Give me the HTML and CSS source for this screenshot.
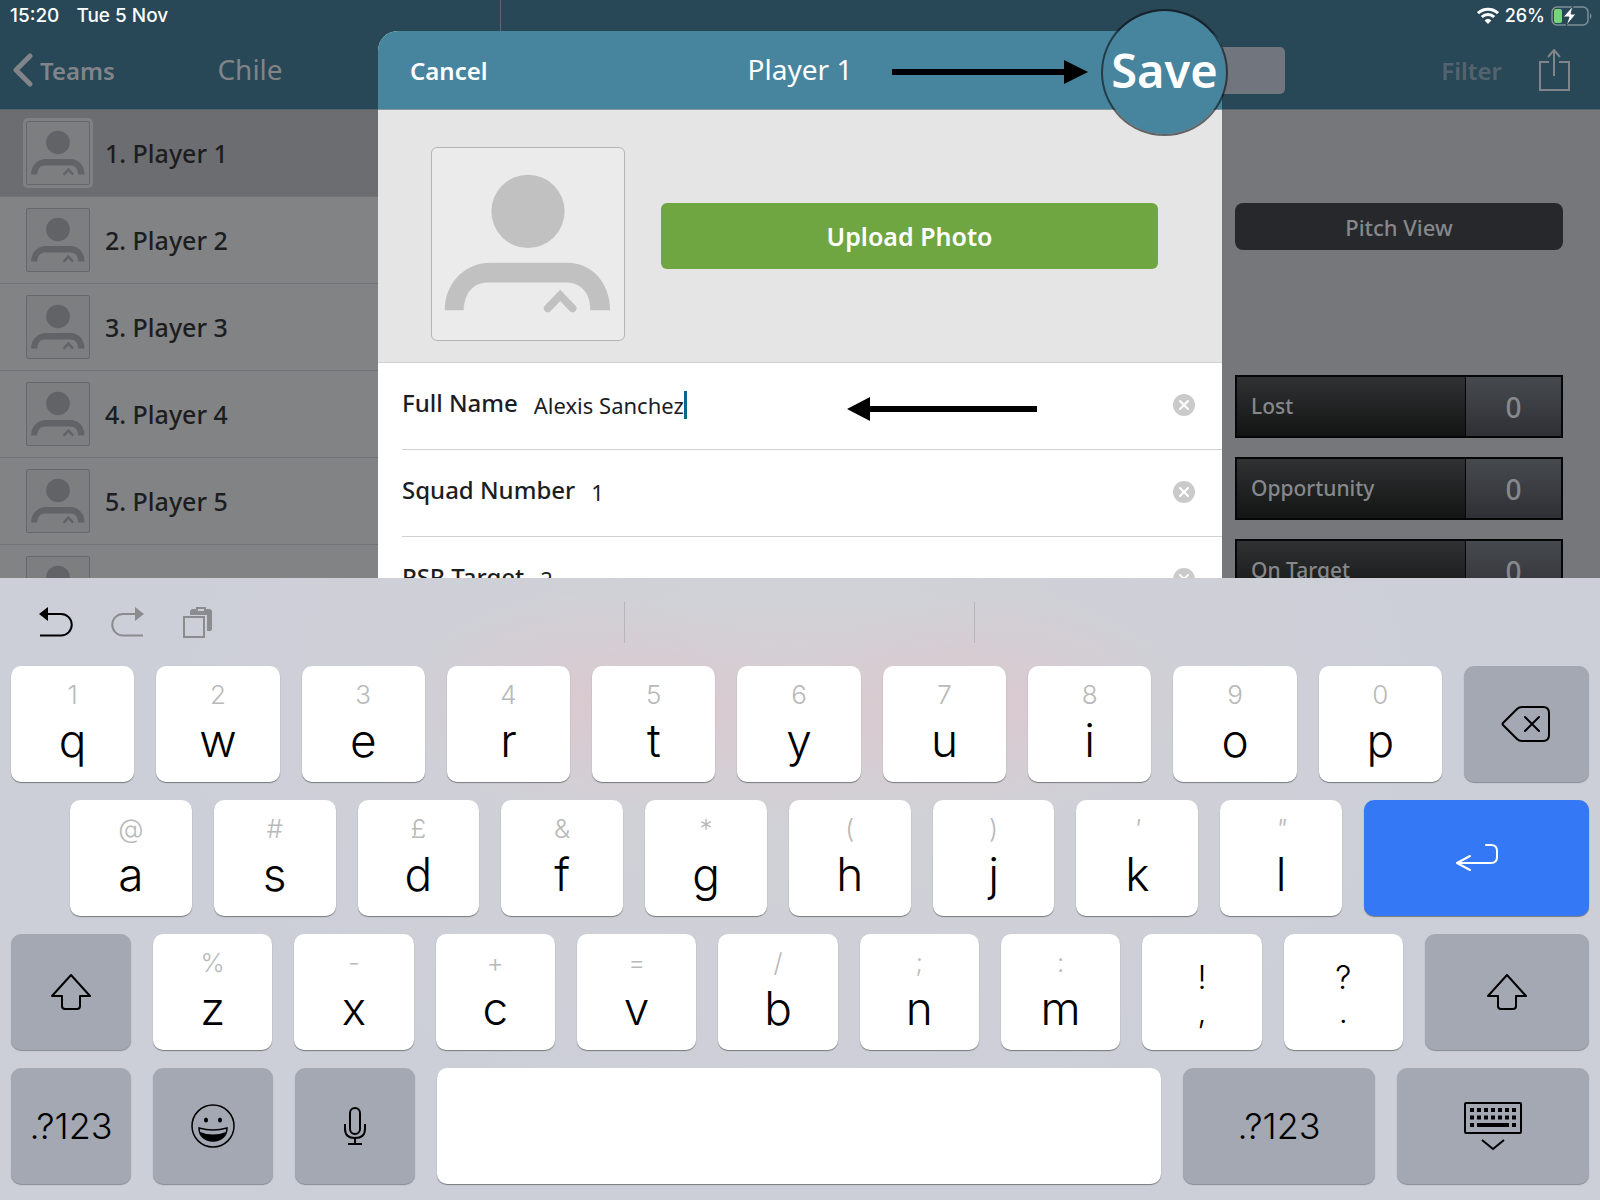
FILE: index.html
```html
<!DOCTYPE html>
<html lang="en">
<head>
  <meta charset="UTF-8">
  <meta name="viewport" content="width=device-width, initial-scale=1.0">
  <title>Player 1</title>
  <link rel="stylesheet" href="styles.css">
</head>
<body>
  <svg width="0" height="0" class="defs" aria-hidden="true">
    <symbol id="person" viewBox="0 0 194 194">
      <circle cx="97" cy="64" r="37"/>
      <path d="M13 164v-4c2-26 22-44 46-44h78c24 0 43 20 43 48h-20c0-18-10-28-25-28H57c-15 0-24 10-25 28z"/>
      <path class="person-chevron" d="M117 162l12.500-13 12.500 13"/>
    </symbol>
    <symbol id="clear" viewBox="0 0 22 22">
      <circle cx="11" cy="11" r="11" fill="#cacaca"/>
      <path d="M7 7l8 8M15 7l-8 8" stroke="#fff" stroke-width="2" stroke-linecap="round"/>
    </symbol>
    <symbol id="shift" viewBox="0 0 42 38">
      <path d="M21 2L40 23H30v10q0 3-3 3H15q-3 0-3-3V23H2z" fill="none" stroke="#000" stroke-width="2" stroke-linejoin="round"/>
    </symbol>
  </svg>

  <div class="app">
    <div class="stage">
      <aside class="sidebar">
        <div class="status">
          <span>15:20</span>
          <span>Tue 5 Nov</span>
        </div>
        <div class="nav">
          <button class="nav-back">
            <svg width="20" height="34" viewBox="0 0 20 34"><path d="M17 3L3 17l14 14" fill="none" stroke="currentColor" stroke-width="5" stroke-linecap="round" stroke-linejoin="round"/></svg>
            Teams
          </button>
          <h1 class="nav-title">Chile</h1>
        </div>
        <ul class="players">
          <li class="player selected"><svg class="avatar"><use href="#person"/></svg>1. Player 1</li>
          <li class="player"><svg class="avatar"><use href="#person"/></svg>2. Player 2</li>
          <li class="player"><svg class="avatar"><use href="#person"/></svg>3. Player 3</li>
          <li class="player"><svg class="avatar"><use href="#person"/></svg>4. Player 4</li>
          <li class="player"><svg class="avatar"><use href="#person"/></svg>5. Player 5</li>
          <li class="player"><svg class="avatar"><use href="#person"/></svg></li>
        </ul>
      </aside>

      <main class="main">
        <div class="status status-right">
          <svg width="22" height="17" viewBox="0 0 22 17" fill="none" stroke="#fff" stroke-width="3">
            <path d="M1 6.200a14.500 14.500 0 0 1 20 0"/>
            <path d="M4.800 10a9 9 0 0 1 12.400 0"/>
            <path d="M11 17l-3.400-3.600a5 5 0 0 1 6.800 0z" fill="#fff" stroke="none"/>
          </svg>
          <span>26%</span>
          <svg width="42" height="20" viewBox="0 0 42 20">
            <rect x="1" y="1" width="36" height="18" rx="5" fill="none" stroke="#7f9099" stroke-width="1.500"/>
            <path d="M39 7q3 3 0 6z" fill="#7f9099"/>
            <rect x="3" y="3" width="8" height="14" rx="2" fill="#76d672"/>
            <path d="M22 0L12 11h6l-3 9 10-12h-5z" fill="#fff" stroke="#284757" stroke-width="1"/>
          </svg>
        </div>
        <div class="nav nav-right">
          <div class="segment"></div>
          <button class="nav-filter">Filter</button>
          <button class="nav-share" aria-label="Share">
            <svg width="32" height="42" viewBox="0 0 32 42" fill="none" stroke="currentColor" stroke-width="2"><path d="M11 13H2v28h29V13H21M16 27V2M10 8l6-7 6 7"/></svg>
          </button>
        </div>
        <div class="stats">
          <button class="pitch-view">Pitch View</button>
          <div class="stat"><span class="stat-name">Lost</span><span class="stat-value">0</span></div>
          <div class="stat"><span class="stat-name">Opportunity</span><span class="stat-value">0</span></div>
          <div class="stat"><span class="stat-name">On Target</span><span class="stat-value">0</span></div>
        </div>
      </main>

      <form class="modal">
        <div class="modal-header">
          <button type="button" class="cancel">Cancel</button>
          <h2 class="modal-title">Player 1</h2>
          <svg class="arrow arrow-save" width="196" height="26" viewBox="0 0 196 26"><path d="M0 10h172V1l24 12-24 12v-9H0z"/></svg>
          <button type="submit" class="save">Save</button>
        </div>
        <div class="photo">
          <svg class="photo-frame"><use href="#person"/></svg>
          <button type="button" class="upload">Upload Photo</button>
        </div>
        <div class="field">
          <label for="full-name">Full Name</label>
          <input id="full-name" type="text" size="13" value="Alexis Sanchez">
          <span class="caret"></span>
          <svg class="arrow arrow-name" width="190" height="26" viewBox="0 0 190 26"><path d="M190 10v6H23v9L0 13 23 1v9z"/></svg>
          <button type="button" class="clear" aria-label="Clear"><svg width="22" height="22"><use href="#clear"/></svg></button>
        </div>
        <div class="field">
          <label for="squad-number">Squad Number</label>
          <input id="squad-number" type="text" size="3" value="1">
          <button type="button" class="clear" aria-label="Clear"><svg width="22" height="22"><use href="#clear"/></svg></button>
        </div>
        <div class="field">
          <label for="psr-target">PSR Target</label>
          <input id="psr-target" type="text" size="3" value="2">
          <button type="button" class="clear" aria-label="Clear"><svg width="22" height="22"><use href="#clear"/></svg></button>
        </div>
      </form>
    </div>

    <div class="keyboard">
      <div class="shortcuts">
        <div class="shortcut-icons">
          <button aria-label="Undo"><svg width="34" height="30" viewBox="0 0 34 30"><path d="M1 28.500h21a10.700 10.700 0 0 0 0-21.500H8" fill="none" stroke="#000" stroke-width="2"/><path d="M0 7L9 0v14z"/></svg></button>
          <button aria-label="Redo"><svg width="34" height="30" viewBox="0 0 34 30" fill="#8b8c90"><path d="M32 28.500H12a10.700 10.700 0 0 1 0-21.500h14" fill="none" stroke="#8b8c90" stroke-width="2"/><path d="M33 7L24 0v14z"/></svg></button>
          <button aria-label="Paste"><svg width="30" height="32" viewBox="0 0 30 32" fill="none" stroke="#8b8c90"><path d="M7 6q0-3 3-3h16q3 0 3 3v17q0 2-3 2h-2V9H7z" fill="#8b8c90" stroke="none"/><rect x="1" y="11" width="20" height="20" stroke-width="2"/><path d="M14 2h8v4h-8z" fill="#cdcfd8" stroke-width="2"/></svg></button>
        </div>
        <div class="suggestion"></div>
        <div class="suggestion"></div>
        <div class="suggestion"></div>
      </div>

      <div class="keys">
        <button class="key"><small>1</small>q</button>
        <button class="key"><small>2</small>w</button>
        <button class="key"><small>3</small>e</button>
        <button class="key"><small>4</small>r</button>
        <button class="key"><small>5</small>t</button>
        <button class="key"><small>6</small>y</button>
        <button class="key"><small>7</small>u</button>
        <button class="key"><small>8</small>i</button>
        <button class="key"><small>9</small>o</button>
        <button class="key"><small>0</small>p</button>
        <button class="key dark delete" aria-label="Delete">
          <svg width="50" height="38" viewBox="0 0 50 38" fill="none" stroke="#000" stroke-width="2" stroke-linejoin="round" stroke-linecap="round"><path d="M16 4q2-2 5-2h21q6 0 6 6v22q0 6-6 6H21q-3 0-5-2L2 20q-1-1 0-2zM24 12l14 14M38 12L24 26"/></svg>
        </button>
      </div>

      <div class="keys keys-home">
        <button class="key"><small>@</small>a</button>
        <button class="key"><small>#</small>s</button>
        <button class="key"><small>£</small>d</button>
        <button class="key"><small>&amp;</small>f</button>
        <button class="key"><small>*</small>g</button>
        <button class="key"><small>(</small>h</button>
        <button class="key"><small>)</small>j</button>
        <button class="key"><small class="slant">'</small>k</button>
        <button class="key"><small class="slant">"</small>l</button>
        <button class="key return" aria-label="Return">
          <svg width="44" height="30" viewBox="0 0 44 30" fill="none" stroke="#fff" stroke-width="2" stroke-linecap="round" stroke-linejoin="round"><path d="M31 2h5q6 0 6 6v6q0 6-6 6H2M15 13L2 20l13 7"/></svg>
        </button>
      </div>

      <div class="keys">
        <button class="key dark shift" aria-label="Shift"><svg width="42" height="38"><use href="#shift"/></svg></button>
        <button class="key"><small>%</small>z</button>
        <button class="key"><small>-</small>x</button>
        <button class="key"><small>+</small>c</button>
        <button class="key"><small>=</small>v</button>
        <button class="key"><small>/</small>b</button>
        <button class="key"><small>;</small>n</button>
        <button class="key"><small>:</small>m</button>
        <button class="key punct"><span>!</span><span>,</span></button>
        <button class="key punct"><span>?</span><span>.</span></button>
        <button class="key dark shift-right" aria-label="Shift"><svg width="42" height="38"><use href="#shift"/></svg></button>
      </div>

      <div class="keys keys-bottom">
        <button class="key dark">.?123</button>
        <button class="key dark" aria-label="Emoji">
          <svg width="44" height="44" viewBox="0 0 44 44" fill="none" stroke="#000" stroke-width="2"><circle cx="22" cy="22" r="21" stroke-width="1.500"/><ellipse cx="15" cy="16" rx="2" ry="2.500" fill="#000" stroke="none"/><ellipse cx="29" cy="16" rx="2" ry="2.500" fill="#000" stroke="none"/><path d="M8 24q14 4 28 0c0 8-6 13-14 13S8 32 8 24z" stroke-width="1.500"/><path d="M9 28q13 5 26 0c-2 6-7 9-13 9s-11-3-13-9z" fill="#000" stroke="none"/></svg>
        </button>
        <button class="key dark" aria-label="Dictate">
          <svg width="24" height="40" viewBox="0 0 24 40" fill="none" stroke="#000" stroke-width="2"><rect x="7" y="2" width="10" height="26" rx="5"/><path d="M2 18v5q0 9 10 9t10-9v-5M12 32v6M5 38h14"/></svg>
        </button>
        <button class="key space" aria-label="Space"></button>
        <button class="key dark wide">.?123</button>
        <button class="key dark wide" aria-label="Hide keyboard">
          <svg width="60" height="50" viewBox="0 0 60 50" fill="none" stroke="#000"><rect x="2" y="2" width="56" height="30" rx="1" stroke-width="2"/><path d="M7 9h46M7 16.500h46" stroke-width="4" stroke-dasharray="4 3"/><path d="M7 24h4M49 24h4M14 24h32" stroke-width="4"/><path d="M19 39l11 9 11-9" stroke-width="2"/></svg>
        </button>
      </div>
    </div>
  </div>
</body>
</html>
```
FILE: styles.css
```css
:root {
  --bar: #284757;
  --bar-text: #818488;
  --teal: #47849d;
  --green: #6fa642;
  --ui: "Noto Sans", "Open Sans", sans-serif;
  --system: Inter, Roboto, sans-serif;
}

* {
  margin: 0;
  padding: 0;
  box-sizing: border-box;
}

body {
  font-family: var(--ui);
  color: #1c1d1f;
}

button {
  font: inherit;
  color: inherit;
  background: none;
  border: 0;
}

svg {
  display: block;
  flex: none;
}

.defs {
  position: absolute;
}

.person-chevron {
  fill: none;
  stroke: currentColor;
  stroke-width: 8;
  stroke-linecap: round;
}

.app {
  display: flex;
  flex-direction: column;
  height: 100vh;
}

.stage {
  position: relative;
  flex: 1;
  min-height: 0;
  display: flex;
  overflow: hidden;
}

/* left and right panes */
.sidebar {
  width: 500px;
  background: #828385;
}

.main {
  flex: 1;
  background: #76777b;
}

.status {
  display: flex;
  align-items: center;
  gap: 17px;
  height: 31px;
  padding: 0 10px;
  background: var(--bar);
  color: #fff;
  font-family: var(--system);
  font-size: 19px;
  font-weight: 500;
}

.status-right {
  justify-content: flex-end;
  gap: 6px;
  padding-right: 7px;
  font-size: 18px;
}

.main .status,
.main .nav {
  border-left: 1px solid #626a70;
}

.nav {
  position: relative;
  display: flex;
  align-items: center;
  height: 79px;
  padding: 0 13px;
  background: var(--bar);
  border-bottom: 1px solid #57646b;
  color: var(--bar-text);
}

.nav-back {
  display: flex;
  align-items: center;
  gap: 7px;
  font-size: 24px;
  font-weight: 600;
}

.nav-title,
.modal-title {
  position: absolute;
  left: 0;
  right: 0;
  padding-bottom: 3px;
  text-align: center;
  font-size: 28px;
  font-weight: 400;
  pointer-events: none;
}

.nav-right {
  justify-content: flex-end;
  padding-right: 30px;
}

.segment {
  width: 120px;
  height: 47px;
  margin-right: 156px;
  border-radius: 5px;
  background: #70757e;
}

.nav-filter {
  color: #54646e;
  font-size: 24px;
  font-weight: 600;
}

.nav-share {
  margin-left: 36px;
}

.players {
  list-style: none;
}

.player {
  display: flex;
  align-items: center;
  gap: 15px;
  height: 87px;
  padding-left: 26px;
  border-bottom: 1px solid #717276;
  font-size: 25px;
  font-weight: 500;
}

.player.selected {
  background: #6c6d71;
}

.avatar {
  width: 64px;
  height: 64px;
  border: 1px solid #66676b;
  border-radius: 2px;
  background: #7d7e80;
  color: #626367;
  fill: currentColor;
}

.selected .avatar {
  box-shadow: 0 0 0 3px #7f8082;
}

.stats {
  width: 328px;
  margin: 93px 37px 0 auto;
}

.pitch-view {
  display: block;
  width: 100%;
  height: 47px;
  margin-bottom: 125px;
  border-radius: 8px;
  background: #27282c;
  color: #85878b;
  font-size: 22px;
  font-weight: 500;
}

.stat {
  display: flex;
  height: 63px;
  margin-bottom: 19px;
  border: 2px solid #050606;
  color: #86888b;
  font-weight: 500;
}

.stat-name {
  flex: 1;
  padding-left: 14px;
  background: linear-gradient(#303133, #131514);
  font-size: 21px;
  line-height: 59px;
}

.stat-value {
  width: 96px;
  border-left: 1px solid #050606;
  background: linear-gradient(#464a4e, #2f3036);
  font-size: 28px;
  line-height: 61px;
  text-align: center;
}

/* edit player sheet */
.modal {
  position: absolute;
  top: 31px;
  left: 50%;
  width: 844px;
  transform: translateX(-50%);
  background: #fff;
  border-radius: 20px 20px 0 0;
}

.modal-header {
  position: relative;
  display: flex;
  align-items: center;
  height: 79px;
  padding: 0 32px;
  background: var(--teal);
  border-bottom: 1px solid #84989f;
  border-radius: 20px 20px 0 0;
  color: #fff;
}

.cancel {
  font-size: 24px;
  font-weight: 600;
}

.save {
  position: absolute;
  top: -22px;
  right: -6px;
  width: 127px;
  height: 127px;
  padding-bottom: 6px;
  border: 2px solid rgba(10, 12, 15, 0.6);
  border-radius: 50%;
  background: var(--teal) padding-box;
  font-size: 47px;
  font-weight: 600;
}

.arrow {
  position: absolute;
}

.arrow-save {
  left: 514px;
  top: 28px;
}

.arrow-name {
  left: 469px;
  top: 33px;
}

.photo {
  display: flex;
  align-items: center;
  gap: 36px;
  height: 253px;
  padding: 0 64px 0 53px;
  background: #e5e5e5;
  border-bottom: 1px solid #d0d0d0;
}

.photo-frame {
  width: 194px;
  height: 194px;
  margin-top: 16px;
  border: 1px solid #b5b5b5;
  border-radius: 6px;
  background: #ebebeb;
  color: #c1c1c1;
  fill: currentColor;
}

.upload {
  flex: 1;
  height: 66px;
  border-radius: 6px;
  background: var(--green);
  color: #fff;
  font-size: 25px;
  font-weight: 600;
}

.field {
  position: relative;
  display: flex;
  align-items: center;
  height: 87px;
  padding: 0 27px 3px 24px;
}

.field::after {
  content: "";
  position: absolute;
  left: 24px;
  right: 0;
  bottom: 0;
  border-bottom: 1px solid #d0d0d0;
}

.field label {
  margin: 0 16px 6px 0;
  font-size: 24px;
  font-weight: 500;
}

.field input {
  field-sizing: content;
  border: 0;
  outline: 0;
  background: none;
  color: #1c1d1f;
  font-family: var(--ui);
  font-size: 22px;
  font-weight: 400;
}

.caret {
  width: 3px;
  height: 28px;
  background: #0a668b;
}

.clear {
  margin-left: auto;
}

/* on-screen keyboard */
.keyboard {
  display: flex;
  flex-direction: column;
  gap: 18px;
  padding: 0 11px 16px;
  background:
    radial-gradient(ellipse 200px 110px at 37% 20%, rgba(222, 198, 204, 0.6), rgba(222, 198, 204, 0)),
    radial-gradient(ellipse 200px 110px at 62% 20%, rgba(222, 198, 204, 0.6), rgba(222, 198, 204, 0)),
    radial-gradient(ellipse 300px 110px at 50% 22%, rgba(222, 198, 204, 0.5), rgba(222, 198, 204, 0)),
    radial-gradient(ellipse 620px 420px at 50% 20%, #d2d2d6, #cdcfd8);
  font-family: var(--system);
}

.shortcuts {
  display: grid;
  grid-template-columns: 274fr 350fr 350fr 350fr 276fr;
  align-items: center;
  height: 88px;
  margin: 0 -11px -18px;
}

.shortcut-icons {
  display: flex;
  align-items: center;
  gap: 38px;
  padding-left: 39px;
}

.suggestion {
  height: 41px;
}

.suggestion + .suggestion {
  border-left: 1px solid #b5b5bb;
}

.keys {
  display: flex;
  gap: 22px;
}

.keys-home {
  padding-left: 59px;
}

.key {
  display: flex;
  flex: 1 1 0;
  flex-direction: column;
  align-items: center;
  height: 116px;
  padding-top: 14px;
  border-radius: 10px;
  background: #fff;
  box-shadow: 0 1px 1px #77797d;
  color: #000;
  font-size: 46px;
  font-weight: 300;
  line-height: 60px;
}

.key small {
  color: #b9b9b9;
  font-size: 26px;
  line-height: 30px;
}

.key .slant {
  font-style: italic;
}

.key.dark,
.key.return {
  justify-content: center;
  padding-top: 0;
}

.key.dark {
  background: #a4a8b3;
  box-shadow: 0 1px 1px #878a93;
  font-size: 36px;
}

.key.return {
  flex: none;
  width: 225px;
  background: #3478f6;
}

.key.delete {
  flex: none;
  width: 125px;
}

.punct {
  padding-top: 27px;
  font-size: 32px;
  line-height: 34px;
}

.key.shift,
.keys-bottom .key {
  flex: none;
  width: 120px;
}

.shift-right {
  flex: none;
  width: 164px;
}

.keys-bottom .space {
  flex: 1;
}

.keys-bottom .wide {
  width: 192px;
}
```
